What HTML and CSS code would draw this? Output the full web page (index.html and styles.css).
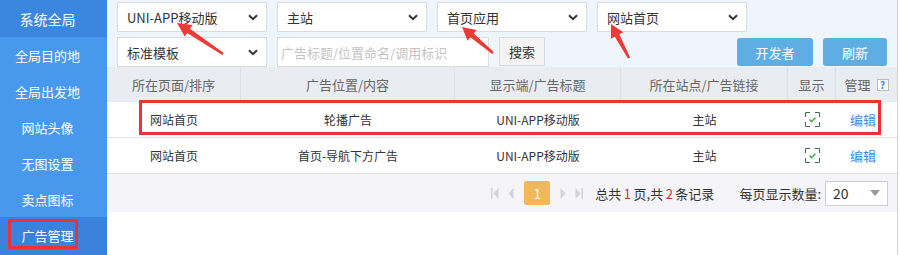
FILE: index.html
```html
<!DOCTYPE html>
<html>
<head>
<meta charset="utf-8">
<link rel="stylesheet" href="styles.css">
</head>
<body>
<div class="page">
  <aside class="side">
    <div class="side-item side-title">系统全局</div>
    <div class="side-item">全局目的地</div>
    <div class="side-item">全局出发地</div>
    <div class="side-item">网站头像</div>
    <div class="side-item">无图设置</div>
    <div class="side-item">卖点图标</div>
    <div class="side-item side-active">广告管理</div>
  </aside>
  <main class="main">
    <div class="filters">
      <div class="frow">
        <div class="sel"><span>UNI-APP移动版</span><svg class="chev" width="10" height="7" viewBox="0 0 10 7"><path d="M1 1.2 L5 5.2 L9 1.2" fill="none" stroke="#333" stroke-width="2"/></svg></div>
        <div class="sel"><span>主站</span><svg class="chev" width="10" height="7" viewBox="0 0 10 7"><path d="M1 1.2 L5 5.2 L9 1.2" fill="none" stroke="#333" stroke-width="2"/></svg></div>
        <div class="sel"><span>首页应用</span><svg class="chev" width="10" height="7" viewBox="0 0 10 7"><path d="M1 1.2 L5 5.2 L9 1.2" fill="none" stroke="#333" stroke-width="2"/></svg></div>
        <div class="sel"><span>网站首页</span><svg class="chev" width="10" height="7" viewBox="0 0 10 7"><path d="M1 1.2 L5 5.2 L9 1.2" fill="none" stroke="#333" stroke-width="2"/></svg></div>
      </div>
      <div class="frow">
        <div class="sel"><span>标准模板</span><svg class="chev" width="10" height="7" viewBox="0 0 10 7"><path d="M1 1.2 L5 5.2 L9 1.2" fill="none" stroke="#333" stroke-width="2"/></svg></div>
        <div class="inp">广告标题/位置命名/调用标识</div>
        <div class="btn-search">搜索</div>
        <div class="acts">
          <div class="btn-blue btn-dev">开发者</div>
          <div class="btn-blue btn-ref">刷新</div>
        </div>
      </div>
    </div>
    <div class="grid ghead">
      <div class="hc">所在页面/排序</div>
      <div class="hc">广告位置/内容</div>
      <div class="hc">显示端/广告标题</div>
      <div class="hc">所在站点/广告链接</div>
      <div class="hc">显示</div>
      <div class="hc hc-last">管理<span class="help">?</span></div>
    </div>
    <div class="grid grow">
      <div class="c">网站首页</div>
      <div class="c">轮播广告</div>
      <div class="c">UNI-APP移动版</div>
      <div class="c">主站</div>
      <div class="c"><svg class="chk" width="15" height="15" viewBox="0 0 15 15"><path d="M0.5 5 V0.5 H5 M10 0.5 H14.5 V5 M14.5 10 V14.5 H10 M5 14.5 H0.5 V10" fill="none" stroke="#3f6f48" stroke-width="1"/><path d="M4.5 7.5 L6.6 9.6 L10.5 5.8" fill="none" stroke="#4caf50" stroke-width="1.6"/></svg></div>
      <div class="c c-edit"><span class="edit">编辑</span></div>
    </div>
    <div class="grid grow">
      <div class="c">网站首页</div>
      <div class="c">首页-导航下方广告</div>
      <div class="c">UNI-APP移动版</div>
      <div class="c">主站</div>
      <div class="c"><svg class="chk" width="15" height="15" viewBox="0 0 15 15"><path d="M0.5 5 V0.5 H5 M10 0.5 H14.5 V5 M14.5 10 V14.5 H10 M5 14.5 H0.5 V10" fill="none" stroke="#3f6f48" stroke-width="1"/><path d="M4.5 7.5 L6.6 9.6 L10.5 5.8" fill="none" stroke="#4caf50" stroke-width="1.6"/></svg></div>
      <div class="c c-edit"><span class="edit">编辑</span></div>
    </div>
    <div class="pager">
      <div class="pnav">
        <svg width="8" height="11" viewBox="0 0 8 11"><rect x="0" y="0" width="1.6" height="11" fill="#d4d4d4"/><path d="M7.5 0 L2.5 5.5 L7.5 11 Z" fill="#d4d4d4"/></svg>
        <svg width="6" height="11" viewBox="0 0 6 11"><path d="M5.5 0 L0.5 5.5 L5.5 11 Z" fill="#d4d4d4"/></svg>
        <span class="pnum">1</span>
        <svg width="6" height="11" viewBox="0 0 6 11"><path d="M0.5 0 L5.5 5.5 L0.5 11 Z" fill="#d4d4d4"/></svg>
        <svg width="8" height="11" viewBox="0 0 8 11"><path d="M0.5 0 L5.5 5.5 L0.5 11 Z" fill="#d4d4d4"/><rect x="6.4" y="0" width="1.6" height="11" fill="#d4d4d4"/></svg>
      </div>
      <div class="ptext">总共<span class="red">1</span>页,共<span class="red">2</span>条记录</div>
      <div class="psize">每页显示数量:</div>
      <div class="psel"><span>20</span><svg width="10" height="6" viewBox="0 0 10 6"><path d="M0 0 H10 L5 6 Z" fill="#999"/></svg></div>
    </div>
  </main>
  <div class="mark mark-row"></div>
  <div class="mark mark-side"></div>
  <svg class="arrows" width="900" height="255" viewBox="0 0 900 255">
    <polygon fill="#ee3a36" points="223.7,53 190,28.7 192.5,25 177,23 184.7,36.6 187.2,32.9 222.3,55"/>
    <polygon fill="#ee3a36" points="493.8,52.1 473.6,33.5 476.5,30 462,27 467.5,40.7 470.4,37.3 492.2,53.9"/>
    <polygon fill="#ee3a36" points="630.1,57.4 619.3,34.3 623.3,32.2 611,24 610.9,38.8 614.9,36.7 627.9,58.6"/>
  </svg>
</div>
</body>
</html>
```

FILE: styles.css
```css
* { box-sizing: border-box; }
html, body { margin: 0; padding: 0; background: #fff; }
body { font-family: "Noto Sans CJK SC", "Noto Sans", sans-serif; color: #333; }

.page { position: relative; display: flex; width: 900px; height: 255px; overflow: hidden; }

.side { width: 107px; flex: none; background: #4898ee; display: flex; flex-direction: column; }
.side-item { height: 36px; display: flex; align-items: center; justify-content: center; padding-right: 12px; color: #fff; font-size: 13px; }
.side-title { height: 37px; background: #3b87e0; font-size: 14px; }
.side-active { background: #3a82db; flex: 1; align-items: flex-start; padding-top: 9px; }

.main { width: 791px; flex: none; border-right: 1px solid #d2d2d2; display: flex; flex-direction: column; }

.filters { background: #eff5fc; padding: 2px 10px 0 10px; display: flex; flex-direction: column; gap: 5px; }
.frow { display: flex; gap: 10px; height: 30px; }
.sel { width: 150px; height: 100%; background: #fff; border: 1px solid #dcdcdc; display: flex; align-items: center; justify-content: space-between; padding: 0 8px 0 9px; font-size: 13px; color: #333; }
.chev { display: block; }
.inp { width: 212px; height: 100%; background: #fff; border: 1px solid #dcdcdc; display: flex; align-items: center; padding-left: 3px; font-size: 13px; color: #c4c4c4; }
.btn-search { width: 46px; height: 29px; background: #f4f4f4; border: 1px solid #dadada; display: flex; align-items: center; justify-content: center; font-size: 13px; color: #333; }
.acts { margin-left: auto; display: flex; gap: 10px; align-items: flex-start; padding-top: 1px; }
.btn-blue { height: 28px; background: #5eaee3; color: #fff; border-radius: 3px; display: flex; align-items: center; justify-content: center; font-size: 13px; }
.btn-dev { width: 76px; }
.btn-ref { width: 64px; }

.grid { display: grid; grid-template-columns: 134px 214px 166px 167px 48px 61px; }
.ghead { height: 35px; background: #e9edf2; }
.hc { display: flex; align-items: center; justify-content: center; font-size: 13px; color: #666; border-right: 1px solid #dbe0e6; }
.hc-last { border-right: none; }
.help { display: inline-flex; align-items: center; justify-content: center; width: 12px; height: 12px; margin-left: 6px; border: 1px solid #bbb; background: #fff; color: #3a86df; font-size: 10px; font-weight: bold; line-height: 1; }

.grow { height: 36px; border-bottom: 1px solid #e1e1e1; background: #fff; }
.c { display: flex; align-items: center; justify-content: center; font-size: 12px; color: #333; }
.c-edit { padding-right: 7px; }
.chk { display: block; }
.edit { color: #3c8ee2; font-size: 13px; }

.pager { height: 38px; background: #f4f4f9; display: flex; align-items: center; padding: 0 9px 0 0; justify-content: flex-end; font-size: 13px; color: #333; }
.pnav { display: flex; align-items: center; gap: 9px; }
.pnav svg { display: block; }
.pnum { width: 26px; height: 24px; background: #efb95b; color: #fff; border-radius: 2px; display: flex; align-items: center; justify-content: center; font-size: 13px; margin: 0 1px; }
.ptext { margin-left: 12px; }
.red { color: #e8262a; margin: 0 2.5px; }
.psize { margin-left: 25px; }
.psel { margin-left: 4px; width: 63px; height: 25px; background: #fff; border: 1px solid #cfcfcf; display: flex; align-items: center; justify-content: space-between; padding: 0 7px 0 7px; font-size: 14px; color: #333; }
.psel svg { display: block; }

.mark { position: absolute; border: 3px solid #ef3134; pointer-events: none; }
.mark-row { left: 139px; top: 100px; width: 742px; height: 35px; }
.mark-side { left: 8px; top: 219px; width: 70px; height: 30px; }

.arrows { position: absolute; left: 0; top: 0; pointer-events: none; }
```
